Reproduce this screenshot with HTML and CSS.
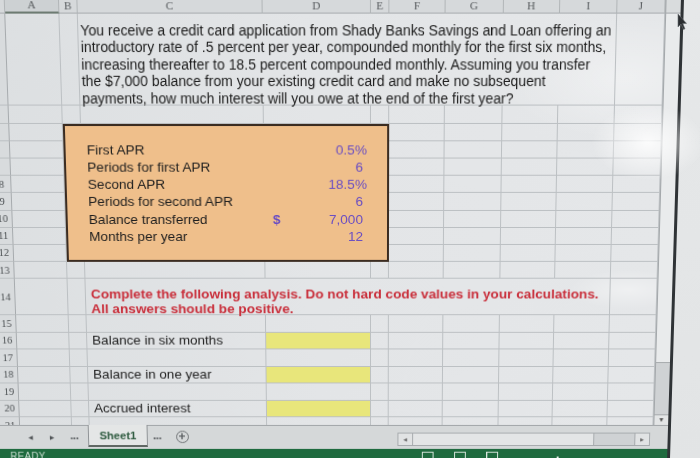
FILE: index.html
```html
<!DOCTYPE html>
<html>
<head>
<meta charset="utf-8">
<title>Sheet1</title>
<link rel="stylesheet" href="styles.css">
</head>
<body>
<div class="screen">
  <div class="window">
    <div class="main">
      <div class="sheet">
        <!-- column headers -->
        <div class="c ch"></div>
        <div class="c ch active">A</div>
        <div class="c ch">B</div>
        <div class="c ch">C</div>
        <div class="c ch">D</div>
        <div class="c ch">E</div>
        <div class="c ch">F</div>
        <div class="c ch">G</div>
        <div class="c ch">H</div>
        <div class="c ch">I</div>
        <div class="c ch">J</div>

        <!-- row 1: problem text -->
        <div class="c rh"></div><div class="c"></div><div class="c"></div>
        <div class="c span7 intro"><p>You receive a credit card application from Shady Banks Savings and Loan offering an<br>introductory rate of .5 percent per year, compounded monthly for the first six months,<br>increasing thereafter to 18.5 percent compounded monthly. Assuming you transfer<br>the $7,000 balance from your existing credit card and make no subsequent<br>payments, how much interest will you owe at the end of the first year?</p></div>
        <div class="c"></div>

        <!-- row 4 -->
        <div class="c rh"></div><div class="c"></div><div class="c"></div><div class="c"></div><div class="c"></div><div class="c"></div><div class="c"></div><div class="c"></div><div class="c"></div><div class="c"></div><div class="c"></div>

        <!-- row 5 with input box -->
        <div class="c rh"></div><div class="c"></div>
        <div class="inputs">
          <div class="in-row"><span class="lbl">First APR</span><span class="val pct">0.5%</span></div>
          <div class="in-row"><span class="lbl">Periods for first APR</span><span class="val">6</span></div>
          <div class="in-row"><span class="lbl">Second APR</span><span class="val pct">18.5%</span></div>
          <div class="in-row"><span class="lbl">Periods for second APR</span><span class="val">6</span></div>
          <div class="in-row"><span class="lbl">Balance transferred</span><span class="val"><span class="cur">$</span>7,000</span></div>
          <div class="in-row"><span class="lbl">Months per year</span><span class="val">12</span></div>
        </div>
        <div class="c"></div><div class="c"></div><div class="c"></div><div class="c"></div><div class="c"></div>

        <!-- rows 6-12 -->
        <div class="c rh"></div><div class="c"></div><div class="c"></div><div class="c"></div><div class="c"></div><div class="c"></div><div class="c"></div>
        <div class="c rh"></div><div class="c"></div><div class="c"></div><div class="c"></div><div class="c"></div><div class="c"></div><div class="c"></div>
        <div class="c rh"><span>8</span></div><div class="c"></div><div class="c"></div><div class="c"></div><div class="c"></div><div class="c"></div><div class="c"></div>
        <div class="c rh"><span>9</span></div><div class="c"></div><div class="c"></div><div class="c"></div><div class="c"></div><div class="c"></div><div class="c"></div>
        <div class="c rh"><span>10</span></div><div class="c"></div><div class="c"></div><div class="c"></div><div class="c"></div><div class="c"></div><div class="c"></div>
        <div class="c rh"><span>11</span></div><div class="c"></div><div class="c"></div><div class="c"></div><div class="c"></div><div class="c"></div><div class="c"></div>
        <div class="c rh"><span>12</span></div><div class="c"></div><div class="c"></div><div class="c"></div><div class="c"></div><div class="c"></div><div class="c"></div>

        <!-- row 13 -->
        <div class="c rh"><span>13</span></div><div class="c"></div><div class="c"></div><div class="c"></div><div class="c"></div><div class="c"></div><div class="c"></div><div class="c"></div><div class="c"></div><div class="c"></div><div class="c"></div>

        <!-- row 14: instructions -->
        <div class="c rh"><span>14</span></div><div class="c"></div><div class="c"></div>
        <div class="c span7 note">Complete the following analysis. Do not hard code values in your calculations.<br>All answers should be positive.</div>
        <div class="c"></div>

        <!-- rows 15-21 -->
        <div class="c rh"><span>15</span></div><div class="c"></div><div class="c"></div><div class="c"></div><div class="c"></div><div class="c"></div><div class="c"></div><div class="c"></div><div class="c"></div><div class="c"></div><div class="c"></div>
        <div class="c rh"><span>16</span></div><div class="c"></div><div class="c"></div><div class="c q">Balance in six months</div><div class="c ans"></div><div class="c"></div><div class="c"></div><div class="c"></div><div class="c"></div><div class="c"></div><div class="c"></div>
        <div class="c rh"><span>17</span></div><div class="c"></div><div class="c"></div><div class="c"></div><div class="c"></div><div class="c"></div><div class="c"></div><div class="c"></div><div class="c"></div><div class="c"></div><div class="c"></div>
        <div class="c rh"><span>18</span></div><div class="c"></div><div class="c"></div><div class="c q">Balance in one year</div><div class="c ans"></div><div class="c"></div><div class="c"></div><div class="c"></div><div class="c"></div><div class="c"></div><div class="c"></div>
        <div class="c rh"><span>19</span></div><div class="c"></div><div class="c"></div><div class="c"></div><div class="c"></div><div class="c"></div><div class="c"></div><div class="c"></div><div class="c"></div><div class="c"></div><div class="c"></div>
        <div class="c rh"><span>20</span></div><div class="c"></div><div class="c"></div><div class="c q">Accrued interest</div><div class="c ans"></div><div class="c"></div><div class="c"></div><div class="c"></div><div class="c"></div><div class="c"></div><div class="c"></div>
        <div class="c rh"><span>21</span></div><div class="c"></div><div class="c"></div><div class="c"></div><div class="c"></div><div class="c"></div><div class="c"></div><div class="c"></div><div class="c"></div><div class="c"></div><div class="c"></div>
      </div>

      <div class="vscroll">
        <div class="vs-up"></div>
        <div class="vs-thumb"></div>
        <div class="vs-track"></div>
        <div class="vs-down">&#9662;</div>
      </div>
    </div>

    <div class="tabbar">
      <div class="tabs">
        <span class="nav">&#9664;</span>
        <span class="nav">&#9654;</span>
        <span class="dots">...</span>
        <span class="tab">Sheet1</span>
        <span class="dots more">...</span>
        <span class="add">+</span>
      </div>
      <div class="hscroll">
        <span class="hs-btn">&#9664;</span>
        <span class="hs-thumb"></span>
        <span class="hs-track"></span>
        <span class="hs-btn">&#9654;</span>
      </div>
    </div>

    <div class="status">
      <span class="ready">READY</span>
      <span class="views">
        <span class="vw"></span><span class="vw"></span><span class="vw"></span>
      </span>
      <span class="dot"></span>
    </div>
  </div>
  <div class="margin"></div>
</div>

<div class="glare"></div>

<svg class="cursor" width="10" height="18" viewBox="0 0 10 18">
  <path d="M1 1 L1 14 L4 11 L6.5 16.5 L8 15.8 L5.6 10.4 L9.5 10.4 Z" fill="#2a2d30" stroke="#6a6e72" stroke-width="0.6"/>
</svg>
</body>
</html>
```

FILE: styles.css
```css
* { box-sizing: border-box; margin: 0; padding: 0; }

html, body { width: 700px; height: 458px; overflow: hidden; }

body {
  position: relative;
  background: #e2e4e5;
  font-family: "Liberation Sans", Arial, sans-serif;
}

/* The screen is photographed slightly from below: a gentle keystone tilt */
.screen {
  display: flex;
  width: 740px;
  height: 475px;
  margin-left: -20px;
  transform-origin: 392px 229px;
  transform: perspective(400px) rotateX(-2.292deg);
}

.window {
  display: flex;
  flex-direction: column;
  width: 697px;
  height: 475px;
  border-right: 3px solid #2f3336;
  background: #e0e3e5;
}

.margin {
  flex: 1;
  background: linear-gradient(180deg, #e6e8e9, #e2e4e5);
}

.main { display: flex; height: 428.8px; }

/* ---------- spreadsheet grid ---------- */
.sheet {
  display: grid;
  width: 679px;
  height: 428.8px;
  overflow: hidden;
  grid-template-columns: 33px 53px 18px 181px 106px 18px 55px 56.5px 55.5px 56px 47px;
  grid-template-rows: 17.7px 89.8px repeat(10, 17.175px) 37px repeat(7, 17.47px);
  color: #1e1e1e;
  font-size: 13.6px;
  background:
    radial-gradient(ellipse 120px 60px at 640px 80px, rgba(255,255,255,0.4), rgba(255,255,255,0) 100%),
    radial-gradient(ellipse 60px 20px at 650px 290px, rgba(255,255,255,0.4), rgba(255,255,255,0) 100%),
    linear-gradient(90deg, #dcdfe1 0%, #e3e5e7 50%, #e5e7e9 100%);
}

.c {
  border-right: 1px solid #bcc0c3;
  border-bottom: 1px solid #bcc0c3;
  min-width: 0;
  white-space: nowrap;
}

.ch {
  display: flex;
  align-items: center;
  justify-content: center;
  background: #d6d9db;
  border-right-color: #b2b6b8;
  border-bottom-color: #a9adb0;
  font-family: "Liberation Serif", "DejaVu Serif", serif;
  font-size: 11px;
  line-height: 9px;
  padding-top: 4px;
  color: #565a5d;
}
.ch.active {
  background: #cdd1d3;
  border-bottom: 2px solid #6d7b72;
}

.rh {
  display: flex;
  align-items: center;
  justify-content: flex-end;
  padding-right: 3px;
  background: #d8dbdd;
  border-right-color: #a7abae;
  font-family: "Liberation Serif", "DejaVu Serif", serif;
  font-size: 10.5px;
  color: #4a4e51;
}
.rh span { width: 12px; text-align: center; }

.span7 { grid-column: span 7; }

.intro p {
  padding: 9px 0 0 2px;
  line-height: 16.5px;
  font-size: 13.8px;
  color: #1c1c1c;
}

/* ---------- input box ---------- */
.inputs {
  grid-column: span 4;
  grid-row: span 8;
  background: #efbf8b;
  border: 2px solid #3b2c21;
  padding-top: 15.2px;
  display: flex;
  flex-direction: column;
}
.in-row {
  display: grid;
  grid-template-columns: 16px 181px 106px;
  height: 17.175px;
  align-items: center;
  line-height: 17px;
}
.lbl { grid-column: 2; padding-left: 5px; color: #1e1e1e; }
.val {
  grid-column: 3;
  display: flex;
  justify-content: flex-end;
  padding-right: 8px;
  color: #6a4ec2;
}
.val.pct { padding-right: 4px; }
.cur { margin-right: auto; padding-left: 8px; font-weight: bold; }

/* ---------- analysis section ---------- */
.note {
  padding: 7.5px 0 0 5px;
  color: #c92f3b;
  font-weight: bold;
  font-size: 13.7px;
  line-height: 15.2px;
}
.q {
  display: flex;
  align-items: center;
  padding-left: 5px;
}
.ans { background: #e8e67b; }

/* ---------- vertical scrollbar ---------- */
.vscroll {
  width: 15px;
  display: flex;
  flex-direction: column;
  background: #dfe1e2;
  border-left: 1px solid #a4a8ab;
}
.vs-up { height: 17.7px; background: #d9dcdd; border-bottom: 1px solid #a4a8ab; }
.vs-thumb { height: 347px; background: #e9ebec; border-bottom: 1px solid #a4a8ab; }
.vs-track { flex: 1; background: #cfd2d4; }
.vs-down {
  height: 11px;
  background: #e3e5e6;
  border-top: 1px solid #a4a8ab;
  font-size: 8px;
  line-height: 10px;
  text-align: center;
  color: #555;
}

/* ---------- sheet tabs ---------- */
.tabbar {
  display: flex;
  height: 25px;
  background: #d5d8d9;
  border-top: 1px solid #a0a4a7;
}
.tabs {
  display: flex;
  align-items: center;
  width: 417.5px;
  padding-left: 32px;
  font-size: 11px;
  color: #4d5154;
}
.nav { width: 22px; text-align: center; font-size: 6px; color: #505457; }
.dots {
  width: 24px;
  text-align: center;
  font-size: 12px;
  font-weight: bold;
  letter-spacing: -0.5px;
  color: #5a5e61;
  padding-bottom: 3px;
}
.dots.more { width: 19px; }
.tab {
  align-self: stretch;
  width: 61px;
  margin: -1px 0 2px 2px;
  background: #e4e6e6;
  border: 1px solid #8f9396;
  border-top: none;
  border-bottom: 2px solid #5d6561;
  text-align: center;
  line-height: 22px;
  font-weight: bold;
  font-size: 11.5px;
  color: #2f5b40;
}
.add {
  width: 13px;
  height: 13px;
  margin-left: 9.5px;
  border: 1.3px solid #6d7174;
  border-radius: 50%;
  font-size: 12px;
  line-height: 10px;
  text-align: center;
  font-weight: bold;
  color: #5d6164;
}

.hscroll {
  display: flex;
  width: 258px;
  height: 14px;
  margin-top: 7px;
  border: 1px solid #a6aaad;
  background: #cfd2d4;
}
.hs-btn {
  width: 15px;
  background: #e1e3e4;
  border-right: 1px solid #a6aaad;
  font-size: 5px;
  line-height: 12px;
  text-align: center;
  color: #666;
}
.hs-btn:last-child { border-right: none; border-left: 1px solid #a6aaad; }
.hs-thumb { width: 185px; background: #e3e5e6; border-right: 1px solid #a6aaad; }
.hs-track { flex: 1; }

/* ---------- status bar ---------- */
.status {
  display: flex;
  flex: 1;
  background: #1f6b3f;
}
.ready {
  width: 443px;
  padding: 3px 0 0 22px;
  font-size: 10px;
  line-height: 10px;
  color: #c8dccf;
  letter-spacing: 0.3px;
}
.views {
  display: flex;
  gap: 21px;
  padding-top: 3px;
}
.vw {
  width: 12px;
  height: 9px;
  border: 1px solid #d9e6dd;
}
.dot {
  width: 2px;
  height: 2px;
  margin: 8px 0 0 60px;
  background: #e8f0ea;
}

/* ---------- light reflection on the screen (overlay) ---------- */
.glare {
  position: absolute;
  left: 585px;
  top: 100px;
  width: 115px;
  height: 85px;
  pointer-events: none;
  background: radial-gradient(ellipse 50% 45% at 55% 50%, rgba(255,255,255,0.85), rgba(255,255,255,0) 100%);
}

/* ---------- mouse pointer overlay ---------- */
.cursor {
  position: absolute;
  left: 677px;
  top: 13px;
}
```
